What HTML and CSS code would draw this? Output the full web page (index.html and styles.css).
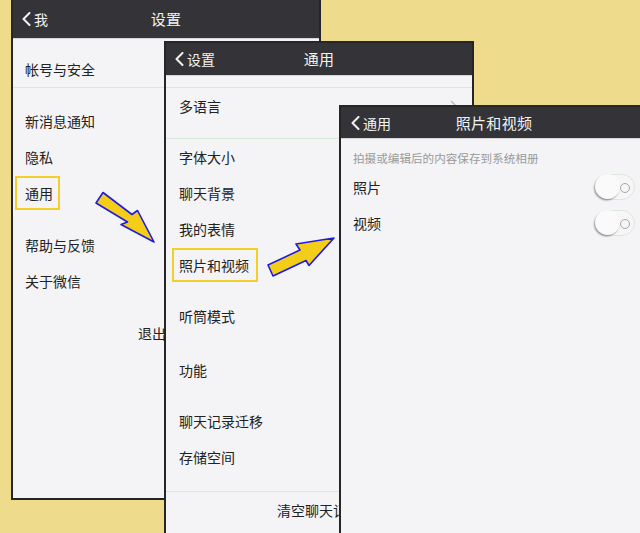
FILE: index.html
```html
<!DOCTYPE html>
<html lang="zh-CN">
<head>
<meta charset="utf-8">
<title>设置 · 通用 · 照片和视频</title>
<link rel="stylesheet" href="styles.css">
</head>
<body>
<div class="stage">

  <section class="win win-1">
    <header class="bar">
      <span class="back"><svg class="chev" viewBox="0 0 9 14"><polyline points="7.5,1 1.5,7 7.5,13"/></svg>我</span>
      <h1 class="title">设置</h1>
    </header>
    <div class="body">
      <div class="group g1-a">
        <div class="row">帐号与安全</div>
      </div>
      <div class="group g1-b">
        <div class="row">新消息通知</div>
        <div class="row">隐私</div>
        <div class="row"><span class="hl hl-1">通用</span></div>
      </div>
      <div class="group g1-c">
        <div class="row">帮助与反馈</div>
        <div class="row">关于微信</div>
      </div>
      <div class="group g1-d">
        <div class="row center">退出登录</div>
      </div>
    </div>
  </section>

  <section class="win win-2">
    <header class="bar">
      <span class="back"><svg class="chev" viewBox="0 0 9 14"><polyline points="7.5,1 1.5,7 7.5,13"/></svg>设置</span>
      <h1 class="title">通用</h1>
    </header>
    <div class="body">
      <div class="group lined g2-a">
        <div class="row">多语言<svg class="more" viewBox="0 0 7 12"><polyline points="1,1 6,6 1,11"/></svg></div>
      </div>
      <div class="group lined g2-b">
        <div class="row">字体大小</div>
        <div class="row">聊天背景</div>
        <div class="row">我的表情</div>
        <div class="row"><span class="hl hl-2">照片和视频</span></div>
      </div>
      <div class="group g2-c">
        <div class="row">听筒模式</div>
      </div>
      <div class="group g2-d">
        <div class="row">功能</div>
      </div>
      <div class="group g2-e">
        <div class="row">聊天记录迁移</div>
        <div class="row">存储空间</div>
      </div>
      <div class="group lined g2-f">
        <div class="row center">清空聊天记录</div>
      </div>
    </div>
  </section>

  <section class="win win-3">
    <header class="bar">
      <span class="back"><svg class="chev" viewBox="0 0 9 14"><polyline points="7.5,1 1.5,7 7.5,13"/></svg>通用</span>
      <h1 class="title">照片和视频</h1>
    </header>
    <div class="body">
      <p class="caption">拍摄或编辑后的内容保存到系统相册</p>
      <div class="group">
        <div class="row">照片<span class="toggle"></span></div>
        <div class="row">视频<span class="toggle"></span></div>
      </div>
    </div>
  </section>

  <svg class="arrows" viewBox="0 0 640 533">
    <polygon points="103,192.5 132,214.5 137.5,210.5 154,242 121,224.5 127.5,222 96,203"/>
    <polygon points="268,265 300,250 296,244 334,238 309,265.5 306,260.5 273,276"/>
  </svg>

</div>
</body>
</html>
```

FILE: styles.css
```css
* { box-sizing: border-box; margin: 0; padding: 0; }

html, body {
  width: 640px;
  height: 533px;
  overflow: hidden;
  background: #eedb8b;
}

body {
  font-family: "Noto Sans CJK SC", "Noto Sans", "Liberation Sans", sans-serif;
  color: #222;
}

.stage {
  position: relative;
  width: 640px;
  height: 533px;
  overflow: hidden;
  background: #eedb8b;
}

/* phone screens stacked on the desktop */
.win {
  position: absolute;
  width: 310px;
  background: #f4f4f6;
  border: 2px solid #262626;
  overflow: hidden;
}
.win-1 { left: 11px; top: -2px; height: 502px; z-index: 1; }
.win-2 { left: 164px; top: 41px; height: 520px; z-index: 2; }
.win-3 { left: 339px; top: 105px; width: 310px; height: 460px; z-index: 3; }

/* navigation bar */
.bar {
  display: grid;
  grid-template-columns: 1fr auto 1fr;
  align-items: center;
  background: #343438;
  color: #f2f2f2;
  border-bottom: 1px solid #d6d6d8;
}
.win-1 .bar { height: 39px; padding: 0 9px; }
.win-2 .bar { height: 33px; padding: 0 9px; }
.win-3 .bar { height: 32px; padding: 0 10px; }

.back {
  display: flex;
  align-items: center;
  gap: 3px;
  font-size: 14px;
  line-height: 20px;
}
.chev {
  width: 9px;
  height: 14px;
  fill: none;
  stroke: #f2f2f2;
  stroke-width: 2;
  stroke-linecap: round;
  stroke-linejoin: round;
}
.title {
  grid-column: 2;
  font-size: 15px;
  font-weight: 400;
  line-height: 20px;
  letter-spacing: 0.3px;
}

/* list content */
.body { display: flex; flex-direction: column; }
.win-1 .body { padding: 0 12px; }
.win-2 .body { padding: 0 13px; }
.win-3 .body { padding: 0 12px; }

.row {
  display: flex;
  align-items: center;
  height: 36px;
  font-size: 14px;
  white-space: nowrap;
}
.row.center { justify-content: center; }

.group.lined { border-top: 1px solid #d7e8db; margin-left: -13px; margin-right: -13px; padding: 0 13px; }

.g1-a { margin-top: 12px; border-bottom: 1px solid #d7e8db; margin-left: -12px; margin-right: -12px; padding: 0 12px; }
.g1-b { margin-top: 15px; }
.g1-c { margin-top: 16px; }
.g1-d { margin-top: 16px; }

.g2-a { margin-top: 11px; }
.g2-b { margin-top: 14px; }
.g2-c { margin-top: 15px; }
.g2-d { margin-top: 18px; }
.g2-e { margin-top: 15px; }
.g2-f { margin-top: 16px; }

.more {
  margin-left: auto;
  margin-right: 2px;
  width: 7px;
  height: 12px;
  fill: none;
  stroke: #b8b8b8;
  stroke-width: 1.4;
}

/* highlighted entries */
.hl {
  display: inline-flex;
  align-items: center;
  height: 34px;
  border: 2px solid #f4cf2a;
}
.hl-1 { margin-left: -10px; padding: 0 5px 0 8px; }
.hl-2 { margin-left: -7px; padding: 0 7px 0 5px; }

/* photo & video screen */
.caption {
  margin-top: 8px;
  height: 22px;
  line-height: 22px;
  font-size: 11.6px;
  color: #9a9a9a;
  white-space: nowrap;
}

.toggle {
  position: relative;
  margin-left: auto;
  margin-right: 0;
  width: 40px;
  height: 26px;
  border: 1px solid #dde7df;
  border-radius: 13px;
  background: #f6f6f7;
}
.toggle::before {
  content: "";
  position: absolute;
  left: -1px;
  top: -1px;
  width: 25px;
  height: 25px;
  border-radius: 50%;
  background: #fafafa;
  box-shadow: -1px 1.5px 1.5px rgba(0, 0, 0, 0.35);
}
.toggle::after {
  content: "";
  position: absolute;
  right: 4px;
  top: 8px;
  width: 8px;
  height: 8px;
  border-radius: 50%;
  border: 1px solid #a8a8a8;
}

/* pointer arrows drawn over the screens */
.arrows {
  position: absolute;
  left: 0;
  top: 0;
  width: 640px;
  height: 533px;
  z-index: 5;
  pointer-events: none;
}
.arrows polygon {
  fill: #f3cd18;
  stroke: #1c1ce6;
  stroke-width: 1.6;
  stroke-linejoin: round;
}
```
